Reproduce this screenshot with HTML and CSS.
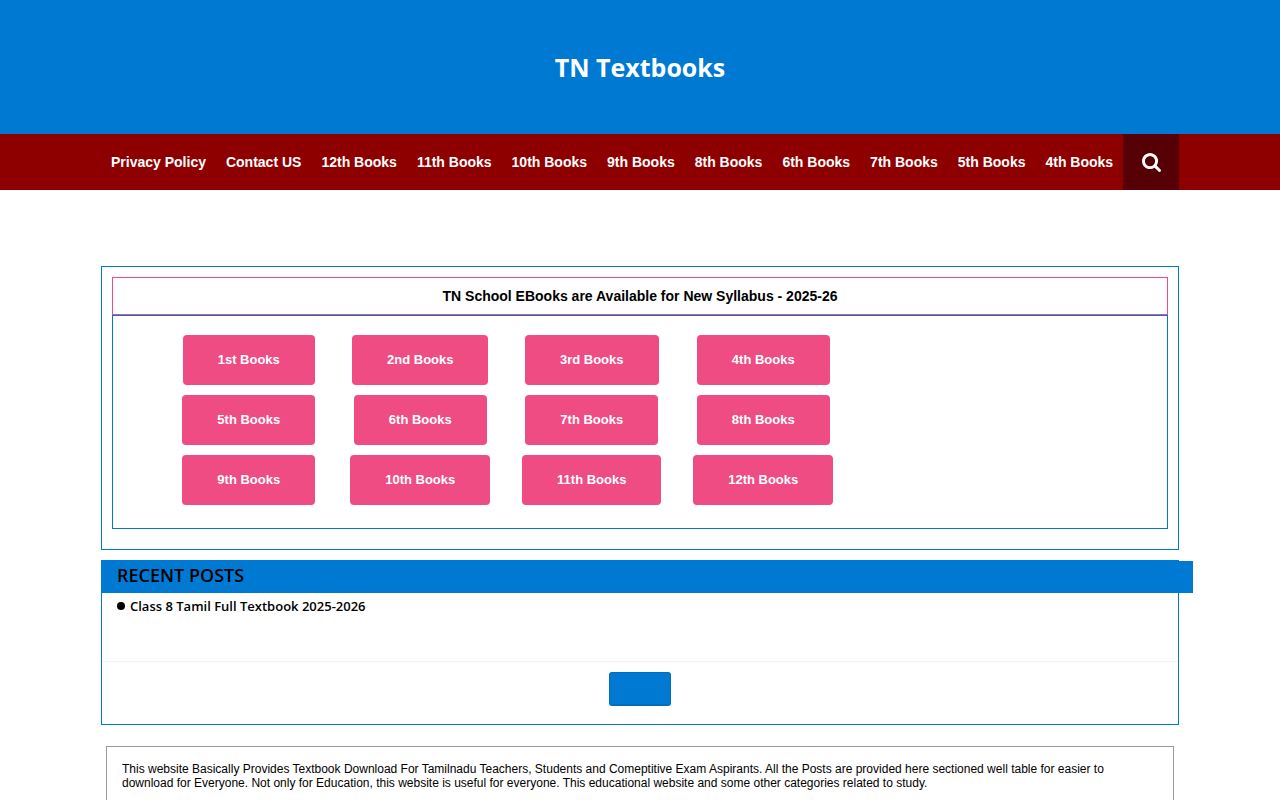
FILE: index.html
```html
<!DOCTYPE html>
<html lang="en">
<head>
<meta charset="utf-8">
<meta name="viewport" content="width=device-width, initial-scale=1">
<title>TN Textbooks</title>
<link rel="stylesheet" href="styles.css">
</head>
<body>
<header class="site-header">
  <h1 class="site-title"><a href="#">TN Textbooks</a></h1>
</header>
<nav class="menu" aria-label="Main">
  <div class="container menu-row">
    <ul class="menu-list">
      <li><a href="#">Privacy Policy</a></li>
      <li><a href="#">Contact US</a></li>
      <li><a href="#">12th Books</a></li>
      <li><a href="#">11th Books</a></li>
      <li><a href="#">10th Books</a></li>
      <li><a href="#">9th Books</a></li>
      <li><a href="#">8th Books</a></li>
      <li><a href="#">6th Books</a></li>
      <li><a href="#">7th Books</a></li>
      <li><a href="#">5th Books</a></li>
      <li><a href="#">4th Books</a></li>
    </ul>
    <button class="search-button" type="button" aria-label="Search">
      <svg class="search-icon" viewBox="0 0 1664 1664" aria-hidden="true"><path fill="currentColor" d="M1152 704q0-185-131.500-316.500T704 256 387.500 387.500 256 704t131.500 316.500T704 1152t316.500-131.500T1152 704zm512 832q0 52-38 90t-90 38q-54 0-90-38l-343-342q-179 124-399 124-143 0-273.500-55.500t-225-150-150-225T0 704t55.500-273.500 150-225 225-150T704 0t273.500 55.500 225 150 150 225T1408 704q0 220-124 399l343 343q37 37 37 90z"/></svg>
    </button>
  </div>
</nav>
<main class="container content">
  <section class="panel books">
    <h2 class="books-title">TN School EBooks are Available for New Syllabus - 2025-26</h2>
    <div class="books-body">
      <ul class="book-grid">
        <li><a class="book" href="#">1st Books</a></li>
        <li><a class="book" href="#">2nd Books</a></li>
        <li><a class="book" href="#">3rd Books</a></li>
        <li><a class="book" href="#">4th Books</a></li>
        <li><a class="book" href="#">5th Books</a></li>
        <li><a class="book" href="#">6th Books</a></li>
        <li><a class="book" href="#">7th Books</a></li>
        <li><a class="book" href="#">8th Books</a></li>
        <li><a class="book" href="#">9th Books</a></li>
        <li><a class="book" href="#">10th Books</a></li>
        <li><a class="book" href="#">11th Books</a></li>
        <li><a class="book" href="#">12th Books</a></li>
      </ul>
    </div>
  </section>
  <section class="panel recent">
    <h2 class="recent-title">RECENT POSTS</h2>
    <article class="post">
      <h3 class="post-title"><a href="#">Class 8 Tamil Full Textbook 2025-2026</a></h3>
    </article>
    <div class="pager">
      <button class="more-button" type="button" aria-label="More posts"></button>
    </div>
  </section>
  <section class="about">
    <p>This website Basically Provides Textbook Download For Tamilnadu Teachers, Students and Comeptitive Exam Aspirants. All the Posts are provided here sectioned well table for easier to download for Everyone. Not only for Education, this website is useful for everyone. This educational website and some other categories related to study.</p>
  </section>
</main>
</body>
</html>
```
FILE: styles.css
```css
* {
  box-sizing: border-box;
}

body {
  margin: 0;
  background: #fff;
  color: #000;
  font-family: "Liberation Sans", Arial, sans-serif;
}

h1, h2, h3, p, ul {
  margin: 0;
  padding: 0;
}

ul {
  list-style: none;
}

a {
  color: inherit;
  text-decoration: none;
}

.container {
  max-width: 1078px;
  margin: 0 auto;
}

.site-header {
  padding: 50px 20px;
  background: #0079d3;
  color: #fff;
  text-align: center;
}

.site-title {
  font: bold 25px/34px "Open Sans", sans-serif;
}

.menu {
  background: #8e0000;
  color: #fff;
}

.menu-row {
  display: flex;
  justify-content: space-between;
}

.menu-list {
  display: flex;
  min-width: 0;
  flex: 1;
  font-size: 14px;
  font-weight: bold;
  line-height: 56px;
  white-space: nowrap;
}

.menu-list a {
  display: block;
  padding: 0 10px;
}

.search-button {
  display: flex;
  flex: none;
  align-items: center;
  justify-content: center;
  width: 56px;
  height: 56px;
  padding: 0;
  border: 0;
  background: #560006;
  color: #fff;
}

.search-icon {
  width: 19px;
  height: 19px;
}

.content {
  padding-top: 76px;
}

.panel {
  margin-bottom: 10px;
  border: 1px solid #0079d3;
}

.books {
  padding: 10px 10px 20px;
}

.books-title {
  border: 1px solid #ee4c82;
  font-size: 14px;
  line-height: 36px;
  text-align: center;
}

.books-body {
  padding: 19px 50px 23px;
  border: 1px solid #0079d3;
}

.book-grid {
  display: grid;
  grid-template-columns: repeat(4, 1fr);
  row-gap: 10px;
  max-width: 686px;
}

.book-grid li {
  display: flex;
  justify-content: center;
}

.book {
  padding: 0 35px;
  border-radius: 4px;
  background: #ee4c82;
  color: #fff;
  font-size: 13px;
  font-weight: bold;
  line-height: 50px;
}

.recent-title {
  width: calc(100% + 15px);
  padding: 0 15px 4px;
  background: #0079d3;
  font: 600 18px/28px "Open Sans", sans-serif;
}

.recent {
  margin-bottom: 21px;
}

.post {
  min-height: 69px;
  padding: 3px 15px;
  border-bottom: 1px solid #f3f3f3;
}

.post-title {
  display: flex;
  align-items: center;
  gap: 5px;
  font: 600 13px/20px "Open Sans", sans-serif;
}

.post-title::before {
  width: 8px;
  height: 8px;
  border-radius: 50%;
  background: #000;
  content: "";
}

.pager {
  padding: 10px 0 18px;
}

.more-button {
  display: block;
  width: 62px;
  height: 34px;
  margin: 0 auto;
  border: 1px solid #006dbe;
  border-bottom-width: 2px;
  border-radius: 3px;
  background: #0079d3;
}

.about {
  margin: 0 5px;
  padding: 15px 15px 30px;
  border: 1px solid #999;
  font-size: 12px;
  line-height: 14px;
}

@media (max-width: 1077px) {
  .menu-list {
    flex-wrap: wrap;
  }

  .book-grid {
    grid-template-columns: repeat(auto-fit, minmax(150px, 1fr));
  }
}
```
